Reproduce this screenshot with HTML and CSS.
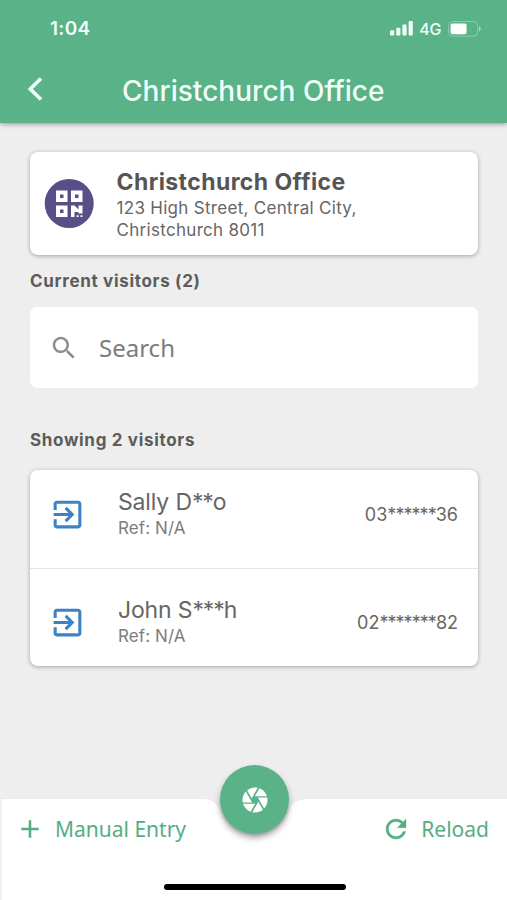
FILE: index.html
```html
<!DOCTYPE html>
<html lang="en">
<head>
<meta charset="utf-8">
<title>Christchurch Office</title>
<link rel="stylesheet" href="styles.css">
</head>
<body>
<div class="app">
  <header class="header">
    <div class="status">
      <span class="time">1:04</span>
      <div class="indicators">
        <svg class="signal" width="23" height="15" viewBox="0 0 23 15" fill="currentColor"><rect x="0" y="9.2" width="4.2" height="5.3" rx="1"/><rect x="6.2" y="6.8" width="4.2" height="7.7" rx="1"/><rect x="12.4" y="3.6" width="4.2" height="10.9" rx="1"/><rect x="18.6" y="0" width="4.2" height="14.5" rx="1"/></svg>
        <span class="network">4G</span>
        <svg class="battery" width="34" height="16" viewBox="0 0 34 16"><rect x=".6" y=".6" width="29" height="14.6" rx="4" fill="none" stroke="#a5dcc3" stroke-opacity=".65"/><rect x="2.6" y="2.6" width="16" height="10.6" rx="2" fill="#fff"/><path d="M31 5.3c2.2 1 2.2 4.2 0 5.2z" fill="#a5dcc3"/></svg>
      </div>
    </div>
    <div class="titlebar">
      <svg class="back" width="18" height="26" viewBox="0 0 18 26"><path d="M15 2.5 4.3 13 15 23.5" fill="none" stroke="currentColor" stroke-width="3.7"/></svg>
      <h1 class="title">Christchurch Office</h1>
    </div>
  </header>

  <main class="content">
    <section class="card site">
      <svg class="qr" width="50" height="50" viewBox="0 0 50 50">
        <circle cx="25.200" cy="24.500" r="24.500" fill="#574f87"/>
        <path fill="#fff" fill-rule="evenodd" d="M12 11.500h11.500V23H12zM16 15.500v3.500h3.500v-3.500zM27 11.500h11.500V23H27zM31 15.500v3.500h3.500v-3.500zM12 26.500h11.500V38H12zM16 30.500v3.500h3.500v-3.500zM27 26.500h3.500l4 4v-4h4v8h-4V33h-4v5H27zM32.600 36.200h2V38h-2zM36.500 36.200h2V38h-2z"/>
      </svg>
      <div class="site-text">
        <h2 class="site-name">Christchurch Office</h2>
        <p class="address">123 High Street, Central City,<br>Christchurch 8011</p>
      </div>
    </section>

    <h3 class="label current">Current visitors (2)</h3>

    <div class="search">
      <svg width="30" height="30" viewBox="0 0 24 24" fill="currentColor"><path d="M15.5 14h-.79l-.28-.27C15.41 12.59 16 11.11 16 9.5 16 5.91 13.09 3 9.5 3S3 5.91 3 9.5 5.91 16 9.5 16c1.61 0 3.09-.59 4.23-1.57l.27.28v.79l5 4.99L20.49 19l-4.99-5zm-6 0C7.01 14 5 11.99 5 9.5S7.01 5 9.5 5 14 7.01 14 9.5 11.99 14 9.5 14z"/></svg>
      <span class="placeholder">Search</span>
    </div>

    <h3 class="label showing">Showing 2 visitors</h3>

    <ul class="card visitors">
      <li class="visitor">
        <svg class="enter" width="37" height="37" viewBox="0 0 24 24" fill="currentColor"><path d="M10.09 15.59 11.5 17l5-5-5-5-1.41 1.41L12.67 11H3v2h9.67l-2.58 2.59zM19 3H5c-1.11 0-2 .9-2 2v4h2V5h14v14H5v-4H3v4c0 1.1.89 2 2 2h14c1.1 0 2-.9 2-2V5c0-1.1-.9-2-2-2z"/></svg>
        <div class="who"><span class="name">Sally D<span class="mask">**</span>o</span><span class="ref">Ref: N/A</span></div>
        <span class="phone">03<span class="mask">******</span>36</span>
      </li>
      <li class="visitor">
        <svg class="enter" width="37" height="37" viewBox="0 0 24 24" fill="currentColor"><path d="M10.09 15.59 11.5 17l5-5-5-5-1.41 1.41L12.67 11H3v2h9.67l-2.58 2.59zM19 3H5c-1.11 0-2 .9-2 2v4h2V5h14v14H5v-4H3v4c0 1.1.89 2 2 2h14c1.1 0 2-.9 2-2V5c0-1.1-.9-2-2-2z"/></svg>
        <div class="who"><span class="name">John S<span class="mask">***</span>h</span><span class="ref">Ref: N/A</span></div>
        <span class="phone">02<span class="mask">*******</span>82</span>
      </li>
    </ul>
  </main>

  <footer class="footer">
    <svg class="bar-shape" width="507" height="104" viewBox="0 0 507 104"><path d="M1.5 3H203Q212 3 216 8L218.800 11A36.500 36.500 0 0 0 290.200 11L293 8Q298 3 307 3H507V104H1.500Z" fill="#fff" stroke="#e9e9e9" stroke-width="1.5" paint-order="stroke"/></svg>
    <button class="fab" aria-label="Scan">
      <svg width="30" height="30" viewBox="0 0 24 24" fill="#fff"><path d="M9.4 10.5l4.77-8.26C13.47 2.09 12.75 2 12 2c-2.4 0-4.6.85-6.32 2.25l3.66 6.35.06-.1zM21.54 9c-.92-2.92-3.15-5.26-6-6.34L11.88 9h9.66zm.26 1h-7.49l.29.5 4.76 8.25C20.99 16.97 22 14.61 22 12c0-.69-.07-1.35-.2-2zM8.54 12l-3.9-6.75C3.01 7.03 2 9.39 2 12c0 .69.07 1.35.2 2h7.49l-1.15-2zm-6.08 3c.92 2.92 3.15 5.26 6 6.34L12.12 15H2.46zm11.27 0l-3.9 6.76c.7.15 1.42.24 2.17.24 2.4 0 4.6-.85 6.32-2.25l-3.66-6.35-.93 1.6z"/></svg>
    </button>
    <div class="actions">
      <div class="action">
        <svg width="30" height="30" viewBox="0 0 24 24" fill="currentColor"><path d="M19 13h-6v6h-2v-6H5v-2h6V5h2v6h6v2z"/></svg>
        <span class="manual">Manual Entry</span>
      </div>
      <div class="action">
        <svg width="30" height="30" viewBox="0 0 24 24" fill="currentColor" stroke="currentColor" stroke-width=".3"><path d="M17.65 6.35C16.2 4.9 14.21 4 12 4c-4.42 0-7.99 3.58-7.99 8s3.57 8 7.99 8c3.73 0 6.84-2.55 7.73-6h-2.080c-.82 2.330-3.040 4-5.650 4-3.310 0-6-2.690-6-6s2.690-6 6-6c1.660 0 3.140.69 4.220 1.780L13 11h7V4l-2.350 2.350z"/></svg>
        <span class="reload">Reload</span>
      </div>
    </div>
    <div class="home"></div>
  </footer>
</div>
</body>
</html>
```
FILE: styles.css
```css
* { box-sizing: border-box; margin: 0; padding: 0; }
body {
  width: 507px;
  height: 900px;
  overflow: hidden;
  background: #eeeeee;
  font-family: Inter, "Liberation Sans", sans-serif;
  color: #666;
}
svg { display: block; flex: none; }
.app { display: flex; flex-direction: column; height: 900px; }

.header {
  height: 123px;
  flex: none;
  background: #5ab289;
  color: #effff7;
  box-shadow: 0 1px 5px rgba(0, 0, 0, .38);
}
.status {
  display: flex;
  justify-content: space-between;
  align-items: center;
  height: 57px;
  padding: 0 25px 0 50px;
}
.time { font-size: 19px; font-weight: 600; line-height: 24px; letter-spacing: .3px; }
.indicators { display: flex; align-items: center; }
.signal { margin-right: -1px; }
.network { margin: 0 7px; font-size: 16px; font-weight: 500; line-height: 20px; letter-spacing: -.4px; }
.titlebar { display: flex; align-items: center; height: 66px; padding-left: 26px; }
.back { margin-top: -2px; }
.title { margin: 1px 0 0 78px; font-size: 28px; font-weight: 500; line-height: 36px; letter-spacing: .03px; white-space: nowrap; }

.content { flex: 1; padding: 29px 29px 0 30px; }
.card { background: #fff; border-radius: 8px; box-shadow: 0 1px 4px rgba(0, 0, 0, .32); }
.site { display: flex; height: 103px; padding: 17px 14px 0; }
.qr { margin-top: 10px; }
.site-text { margin-left: 22.5px; white-space: nowrap; }
.site-name { font-size: 23px; font-weight: 700; line-height: 26px; letter-spacing: .42px; color: #555; }
.address { font-size: 17px; line-height: 22px; letter-spacing: .3px; margin-top: 2px; }
.label { font-size: 17px; font-weight: 700; line-height: 22px; letter-spacing: .68px; color: #5c5c5c; white-space: nowrap; }
.current { margin-top: 15px; }
.search {
  display: flex;
  align-items: center;
  height: 81px;
  margin-top: 15px;
  padding-left: 19px;
  border-radius: 7px;
  background: #fff;
  color: #8d8d8d;
}
.placeholder { margin-left: 20px; font-family: "Noto Sans", sans-serif; font-size: 24px; line-height: 34px; color: #7c7c7c; }
.showing { margin-top: 41px; }
.visitors { height: 196px; margin-top: 19px; list-style: none; }
.visitor { display: flex; align-items: center; height: 98px; padding: 0 20px 0 19px; }
.visitor + .visitor { border-top: 1px solid #e6e6e6; padding-top: 9px; }
.visitor:first-child { padding-bottom: 10px; }
.enter { color: #3c82c4; }
.who { display: flex; flex-direction: column; flex: 1; margin-left: 32px; white-space: nowrap; }
.name { font-size: 23px; line-height: 28px; letter-spacing: -.15px; }
.name .mask { letter-spacing: -1.1px; }
.ref { font-size: 17px; line-height: 24px; letter-spacing: .1px; color: #7d7d7d; }
.phone { margin-top: 2px; font-size: 18px; line-height: 24px; }
.phone .mask { letter-spacing: -.95px; }

.footer { position: relative; flex: none; height: 104px; color: #55ad84; }
.bar-shape { position: absolute; left: 0; top: 0; }
.fab {
  position: absolute;
  left: 220px;
  top: -31px;
  display: flex;
  align-items: center;
  justify-content: center;
  width: 69px;
  height: 69px;
  border: 0;
  border-radius: 50%;
  background: #5ab289;
  box-shadow: 0 4px 6px rgba(0, 0, 0, .34);
}
.actions { position: relative; display: flex; justify-content: space-between; padding: 17px 18px 0 15px; }
.action { display: flex; align-items: center; gap: 10px; font-family: "Noto Sans", sans-serif; font-size: 21px; line-height: 30px; white-space: nowrap; }
.action svg { margin-top: 1px; }
.home { position: absolute; left: 164px; top: 88px; width: 182px; height: 6px; border-radius: 3px; background: #000; }
```
